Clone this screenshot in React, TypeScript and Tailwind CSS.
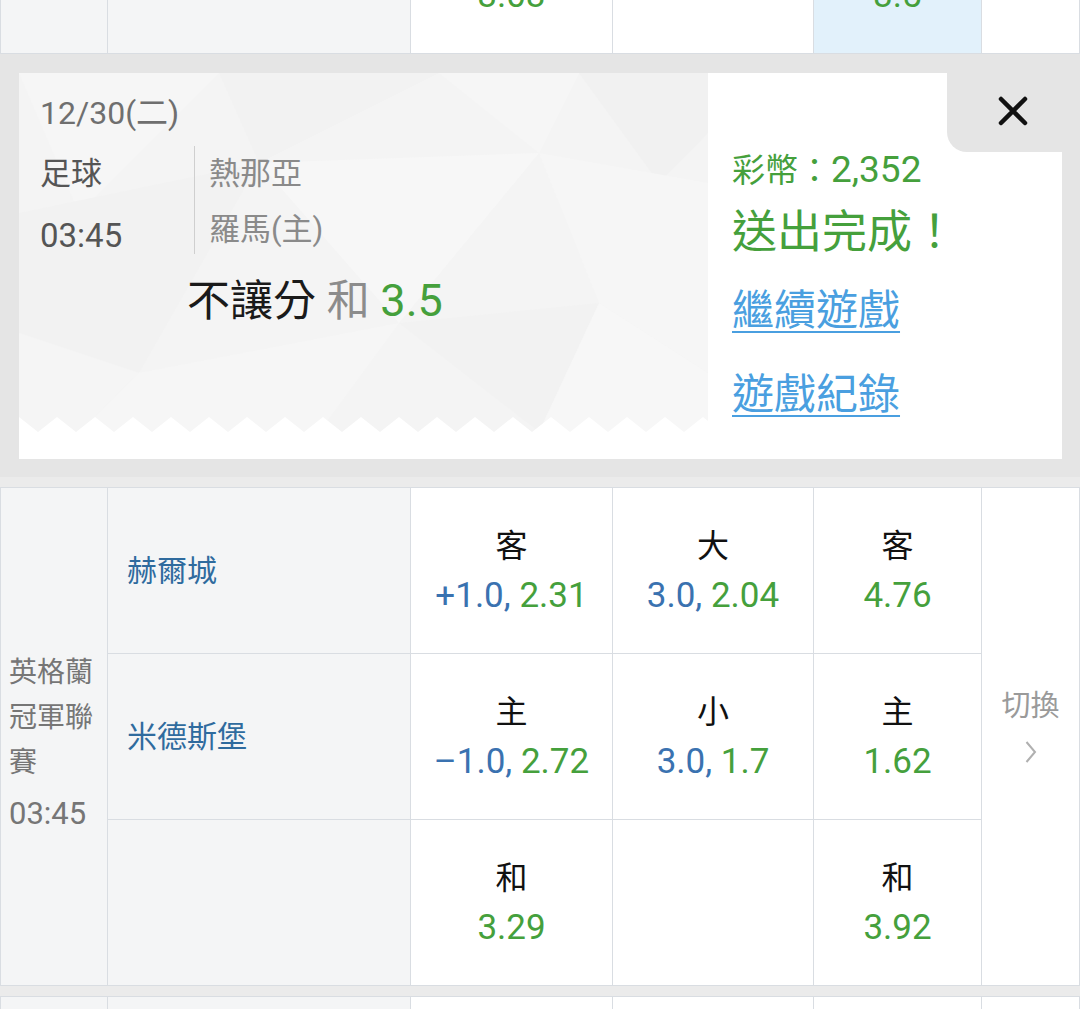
import React from "react";

const FONT = "font-['Roboto','Noto_Sans_CJK_TC','Noto_Sans_CJK_SC',sans-serif]";
const BC = "border-[#d9dde2]";

function OddsCell({
  label,
  pre,
  val,
  bg = "bg-white",
}: {
  label?: string;
  pre?: string;
  val?: string;
  bg?: string;
}) {
  return (
    <div className={`flex flex-col items-center justify-center border-r border-b ${BC} ${bg}`}>
      {label && <div className="text-[32px] leading-[49px] text-[#111]">{label}</div>}
      {val && (
        <div className="text-[35px] leading-[49px] whitespace-nowrap">
          {pre && <span className="text-[#3a72b0]">{pre} </span>}
          <span className="text-[#45a03c]">{val}</span>
        </div>
      )}
    </div>
  );
}

function GeoBackground() {
  return (
    <svg className="absolute inset-0" width="689" height="386" viewBox="0 0 689 386">
      <rect x="0" y="0" width="689" height="386" fill="#f4f4f4" />
      <polygon points="0,0 200,0 60,140" fill="#f6f6f6" />
      <polygon points="200,0 420,0 240,90" fill="#f2f2f2" />
      <polygon points="420,0 560,0 520,80" fill="#f6f6f6" />
      <polygon points="560,0 689,0 689,60 640,110" fill="#f1f1f1" />
      <polygon points="240,90 520,80 380,250" fill="#f7f7f7" />
      <polygon points="0,140 240,90 120,300 0,260" fill="#f2f2f2" />
      <polygon points="520,80 689,110 689,300 580,230" fill="#f6f6f6" />
      <polygon points="120,300 380,250 300,359 60,359" fill="#f6f6f6" />
      <polygon points="380,250 580,230 520,359" fill="#f2f2f2" />
      <polygon points="580,230 689,300 689,359 520,359" fill="#f7f7f7" />
      <polygon points="0,260 120,300 60,359 0,359" fill="#f5f5f5" />
      <polygon
        fill="#ffffff"
        points={(() => {
          const pts: string[] = ["0,386", "0,344"];
          for (let x = 0; x <= 689 + 38; x += 38) {
            pts.push(`${x},344`);
            pts.push(`${x + 19},359`);
          }
          pts.push("689,359", "689,386");
          return pts.join(" ");
        })()}
      />
    </svg>
  );
}

export default function App() {
  return (
    <div className={`w-[1080px] h-[1009px] overflow-hidden bg-white ${FONT}`}>
      {/* previous match, partially visible row */}
      <div className={`h-[54px] overflow-hidden border-b ${BC}`}>
        <div className="-mt-[113px] grid h-[167px] grid-cols-[108px_303px_202px_201px_168px_98px]">
          <div className={`border-l border-r ${BC} bg-[#f4f5f6]`} />
          <div className={`border-r ${BC} bg-[#f4f5f6]`} />
          <div className={`flex flex-col items-center justify-center border-r ${BC} bg-white`}>
            <div className="text-[32px] leading-[49px] text-[#111]">和</div>
            <div className="text-[35px] leading-[49px] text-[#45a03c]">3.03</div>
          </div>
          <div className={`border-r ${BC} bg-white`} />
          <div className={`flex flex-col items-center justify-center border-r ${BC} bg-[#e2f1fb]`}>
            <div className="text-[32px] leading-[49px] text-[#111]">和</div>
            <div className="text-[35px] leading-[49px] text-[#45a03c]">3.5</div>
          </div>
          <div className={`border-r ${BC} bg-white`} />
        </div>
      </div>

      {/* ticket band */}
      <div className="bg-[#e5e5e5] pt-[19px] pl-[19px] pr-[18px] pb-[18px]">
        <div className="flex h-[386px] bg-white">
          {/* left ticket */}
          <div className="relative w-[689px] overflow-hidden">
            <GeoBackground />
            <div className="relative pl-[21px] pt-[21px]">
              <div className="text-[32px] leading-[38px] text-[#6f6f6f]">12/30(二)</div>
              <div className="mt-[14px] flex">
                <div className="w-[154px] text-[31px] text-[#555]">
                  <div className="leading-[56px]">足球</div>
                  <div className="mt-[6px] text-[33px] leading-[56px]">03:45</div>
                </div>
                <div className="h-[108px] border-l border-[#cfcfcf]" />
                <div className="pl-[14px] text-[31px] text-[#8a8a8a]">
                  <div className="leading-[56px]">熱那亞</div>
                  <div className="leading-[56px]">羅馬(主)</div>
                </div>
              </div>
              <div className="ml-[147px] mt-[11px] text-[43px] leading-[52px] whitespace-nowrap">
                <span className="text-[#1a1a1a]">不讓分</span>
                <span className="text-[#8c8c8c]"> 和 </span>
                <span className="text-[45px] text-[#45a03c]">3.5</span>
              </div>
            </div>
          </div>
          {/* right ticket */}
          <div className="relative flex-1 pl-[24px] pt-[77px]">
            <div className="absolute right-0 top-0 flex h-[79px] w-[115px] items-center justify-center rounded-bl-[20px] bg-[#e5e5e5] pl-[16px] pb-[4px]">
              <svg width="30" height="30" viewBox="0 0 30 30">
                <path d="M3 3 L27 27 M27 3 L3 27" stroke="#111" strokeWidth="4.5" strokeLinecap="round" />
              </svg>
            </div>
            <div className="text-[33px] leading-[40px] text-[#45a03c] whitespace-nowrap">
              彩幣：<span className="text-[37px]">2,352</span>
            </div>
            <div className="mt-[15px] text-[45px] leading-[54px] text-[#45a03c] whitespace-nowrap">送出完成！</div>
            <div className="mt-[26px] text-[42px] leading-[50px] text-[#4a9fe0] underline underline-offset-[6px] decoration-2">
              繼續遊戲
            </div>
            <div className="mt-[34px] text-[42px] leading-[50px] text-[#4a9fe0] underline underline-offset-[6px] decoration-2">
              遊戲紀錄
            </div>
          </div>
        </div>
      </div>
      <div className="h-[10px] bg-[#ebebeb]" />

      {/* match table */}
      <div
        className={`grid border-t ${BC} grid-cols-[108px_303px_202px_201px_168px_98px] grid-rows-[166px_166px_166px]`}
      >
        <div
          className={`row-span-3 flex flex-col justify-center border-l border-r border-b ${BC} bg-[#f4f5f6] pl-[8px] pt-[12px] text-[28px] text-[#767676]`}
        >
          <div className="leading-[45px]">英格蘭</div>
          <div className="leading-[45px]">冠軍聯</div>
          <div className="leading-[45px]">賽</div>
          <div className="mt-[6px] text-[31px] leading-[45px]">03:45</div>
        </div>
        <div className={`flex items-center border-r border-b ${BC} bg-[#f4f5f6] pl-[19px] text-[30px] text-[#2f6b9e]`}>
          赫爾城
        </div>
        <OddsCell label="客" pre="+1.0," val="2.31" />
        <OddsCell label="大" pre="3.0," val="2.04" />
        <OddsCell label="客" val="4.76" />
        <div
          className={`row-span-3 col-start-6 row-start-1 flex flex-col items-center justify-center border-r border-b ${BC} bg-white pb-[24px]`}
        >
          <div className="text-[29px] leading-[40px] text-[#9a9a9a]">切換</div>
          <svg className="mt-[14px]" width="12" height="24" viewBox="0 0 12 24">
            <polyline points="1.5,2 10,12 1.5,22" fill="none" stroke="#b0b0b0" strokeWidth="2" />
          </svg>
        </div>

        <div className={`flex items-center border-r border-b ${BC} bg-[#f4f5f6] pl-[19px] text-[30px] text-[#2f6b9e]`}>
          米德斯堡
        </div>
        <OddsCell label="主" pre="–1.0," val="2.72" />
        <OddsCell label="小" pre="3.0," val="1.7" />
        <OddsCell label="主" val="1.62" />

        <div className={`border-r border-b ${BC} bg-[#f4f5f6]`} />
        <OddsCell label="和" val="3.29" />
        <OddsCell />
        <OddsCell label="和" val="3.92" />
      </div>

      <div className={`h-[11px] border-b ${BC} bg-[#ebebeb]`} />
      <div className="grid h-[12px] grid-cols-[108px_303px_202px_201px_168px_98px]">
        <div className={`border-l border-r ${BC} bg-[#f4f5f6]`} />
        <div className={`border-r ${BC} bg-[#f4f5f6]`} />
        <div className={`border-r ${BC} bg-white`} />
        <div className={`border-r ${BC} bg-white`} />
        <div className={`border-r ${BC} bg-white`} />
        <div className={`border-r ${BC} bg-white`} />
      </div>
    </div>
  );
}
